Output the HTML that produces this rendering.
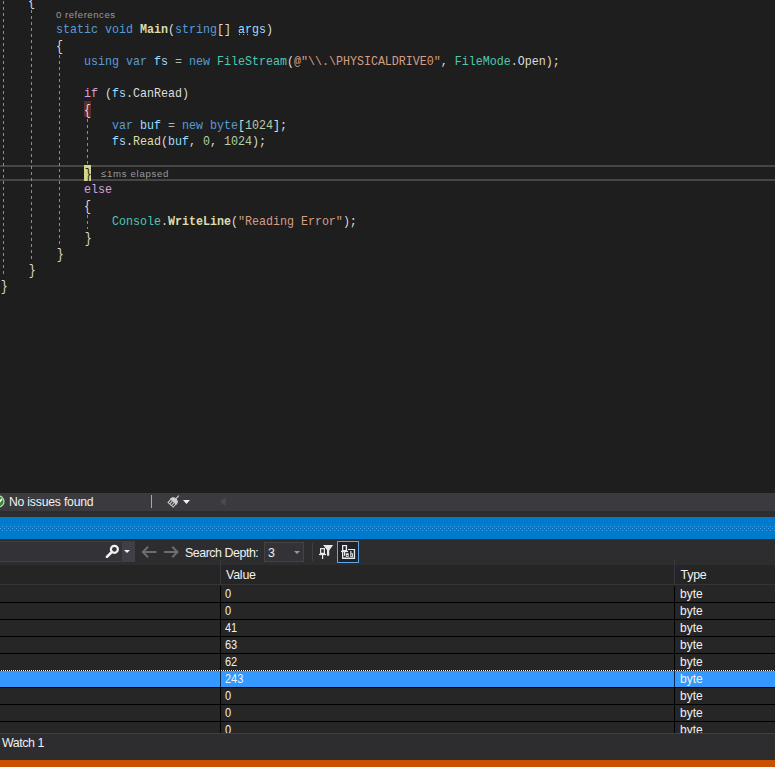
<!DOCTYPE html><html><head><meta charset="utf-8"><style>
*{margin:0;padding:0;box-sizing:border-box}
html,body{width:775px;height:767px;overflow:hidden;background:#1e1e1e}
.a{position:absolute}
.code{position:absolute;left:0;white-space:pre;font-family:"Liberation Mono",monospace;font-size:11.67px;line-height:16px;height:16px;color:#dcdcdc;transform:scaleY(1.1);transform-origin:0 11.5px}
.b{font-weight:bold}
.br{display:inline-block;transform:translateY(1.2px) scaleY(1.1);transform-origin:50% 55%}
.br2{display:inline-block;transform:translate(0.8px,1.2px) scaleY(1.1);transform-origin:50% 55%}
.g{position:absolute;width:1px;background-image:linear-gradient(to bottom,#8c8c8c 0,#8c8c8c 3px,transparent 3px,transparent 6px);background-size:1px 6px;background-repeat:repeat-y}
.ui{font-family:"Liberation Sans",sans-serif;font-size:12px;color:#f1f1f1;white-space:pre;line-height:14px}
svg{position:absolute;overflow:visible}
</style></head><body>

<div class="a" style="left:0px;top:165px;width:775px;height:2px;background:#464646;"></div>
<div class="a" style="left:0px;top:179px;width:775px;height:2px;background:#464646;"></div>
<div class="a" style="left:84px;top:101px;width:7px;height:16px;background:#5e2b2b;"></div>
<div class="a" style="left:84px;top:165px;width:7px;height:16px;background:#d5d686;"></div>
<div class="g" style="left:3px;top:0px;height:277px;background-position:0 1px"></div>
<div class="g" style="left:31px;top:8px;height:253px;background-position:0 2px"></div>
<div class="g" style="left:59px;top:53px;height:192px;background-position:0 2px"></div>
<div class="g" style="left:87px;top:117px;height:48px;background-position:0 2px"></div>
<div class="g" style="left:87px;top:213px;height:16px;background-position:0 2px"></div>
<div class="code" style="top:-7px;left:28px"><span style="color:#dcdcdc" class="br">{</span></div>
<div class="code" style="top:22px;left:56px"><span style="color:#569cd6">static</span><span style="color:#dcdcdc"> </span><span style="color:#569cd6">void</span><span style="color:#dcdcdc"> </span><span style="color:#dcdcaa" class="b">Main</span><span style="color:#dcdcdc">(</span><span style="color:#569cd6">string</span><span style="color:#dcdcdc">[]</span><span style="color:#dcdcdc"> </span><span style="color:#9cdcfe">args</span><span style="color:#dcdcdc">)</span></div>
<div class="code" style="top:38px;left:56px"><span style="color:#dcdcdc" class="br">{</span></div>
<div class="code" style="top:54px;left:84px"><span style="color:#569cd6">using</span><span style="color:#dcdcdc"> </span><span style="color:#569cd6">var</span><span style="color:#dcdcdc"> </span><span style="color:#9cdcfe">fs</span><span style="color:#dcdcdc"> </span><span style="color:#b4b4b4">=</span><span style="color:#dcdcdc"> </span><span style="color:#569cd6">new</span><span style="color:#dcdcdc"> </span><span style="color:#4ec9b0">FileStream</span><span style="color:#dcdcdc">(</span><span style="color:#d69d85">@&quot;\\.\PHYSICALDRIVE0&quot;</span><span style="color:#dcdcdc">, </span><span style="color:#4ec9b0">FileMode</span><span style="color:#dcdcdc">.</span><span style="color:#dcdcdc">Open</span><span style="color:#dcdcdc">);</span></div>
<div class="code" style="top:86px;left:84px"><span style="color:#d8a0df">if</span><span style="color:#dcdcdc"> (</span><span style="color:#9cdcfe">fs</span><span style="color:#dcdcdc">.</span><span style="color:#dcdcdc">CanRead</span><span style="color:#dcdcdc">)</span></div>
<div class="code" style="top:102px;left:84px"><span style="color:#dcdcdc" class="br">{</span></div>
<div class="code" style="top:118px;left:112px"><span style="color:#569cd6">var</span><span style="color:#dcdcdc"> </span><span style="color:#9cdcfe">buf</span><span style="color:#dcdcdc"> </span><span style="color:#b4b4b4">=</span><span style="color:#dcdcdc"> </span><span style="color:#569cd6">new</span><span style="color:#dcdcdc"> </span><span style="color:#569cd6">byte</span><span style="color:#dcdcdc">[</span><span style="color:#b5cea8">1024</span><span style="color:#dcdcdc">];</span></div>
<div class="code" style="top:134px;left:112px"><span style="color:#9cdcfe">fs</span><span style="color:#dcdcdc">.</span><span style="color:#dcdcaa">Read</span><span style="color:#dcdcdc">(</span><span style="color:#9cdcfe">buf</span><span style="color:#dcdcdc">, </span><span style="color:#b5cea8">0</span><span style="color:#dcdcdc">, </span><span style="color:#b5cea8">1024</span><span style="color:#dcdcdc">);</span></div>
<div class="code" style="top:166px;left:84px"><span style="color:#1e1e1e" class="br2">}</span></div>
<div class="code" style="top:182px;left:84px"><span style="color:#d8a0df">else</span></div>
<div class="code" style="top:198px;left:84px"><span style="color:#dcdcdc" class="br">{</span></div>
<div class="code" style="top:214px;left:112px"><span style="color:#4ec9b0">Console</span><span style="color:#dcdcdc">.</span><span style="color:#dcdcaa" class="b">WriteLine</span><span style="color:#dcdcdc">(</span><span style="color:#d69d85">&quot;Reading Error&quot;</span><span style="color:#dcdcdc">);</span></div>
<div class="code" style="top:230px;left:84px"><span style="color:#dcdcdc" class="br2">}</span></div>
<div class="code" style="top:246px;left:56px"><span style="color:#dcdcdc" class="br2">}</span></div>
<div class="code" style="top:262px;left:28px"><span style="color:#dcdcdc" class="br2">}</span></div>
<div class="code" style="top:278px;left:0px"><span style="color:#dcdcdc" class="br2">}</span></div>
<div class="a ui" style="left:56px;top:8px;font-size:9.6px;color:#999999;letter-spacing:0.52px">0 references</div>
<div class="a ui" style="left:101px;top:167px;font-size:9.6px;color:#999999;letter-spacing:0.7px">≤1ms elapsed</div>
<div class="a" style="left:239px;top:34px;width:1px;height:1px;background:#b4b4b4;"></div>
<div class="a" style="left:243px;top:34px;width:1px;height:1px;background:#b4b4b4;"></div>
<div class="a" style="left:247px;top:34px;width:1px;height:1px;background:#b4b4b4;"></div>
<div class="a" style="left:0px;top:493px;width:775px;height:18px;background:#3b3b3f;"></div>
<div class="a" style="left:0px;top:511px;width:775px;height:6px;background:#2d2d30;"></div>
<svg style="left:0;top:493px" width="10" height="18"><circle cx="-1.5" cy="8.5" r="5.5" fill="#388a34" stroke="#b6e3b3" stroke-width="1.2"/><path d="M-4 8.5 L-2 10.5 L2 6" stroke="#fff" stroke-width="1.5" fill="none"/></svg>
<div class="a ui" style="left:9px;top:495px;font-size:12.2px;color:#f1f1f1;letter-spacing:-0.2px">No issues found</div>
<div class="a" style="left:151px;top:495px;width:1px;height:13px;background:#a8a8a8;"></div>
<svg style="left:166.8px;top:492.6px" width="16" height="16"><g transform="rotate(42 7 8)" fill="none" stroke="#cfcfcf" stroke-width="1"><rect x="3.5" y="8.5" width="7" height="4.6"/><line x1="5.8" y1="9" x2="5.8" y2="13"/><line x1="8.2" y1="9" x2="8.2" y2="13"/><path d="M3.2 8.6 C3.2 4.2 10.8 4.2 10.8 8.6 Z" fill="#cfcfcf"/><line x1="7" y1="5.5" x2="7" y2="0.8" stroke-width="1.1"/></g></svg>
<svg style="left:183px;top:500px" width="8" height="5"><path d="M0 0 H7 L3.5 4 Z" fill="#f1f1f1"/></svg>
<svg style="left:218.5px;top:496.6px" width="8" height="10"><path d="M6.6 0 V9.3 L0.8 4.65 Z" fill="#4b4b4f"/></svg>
<div class="a" style="left:0px;top:517px;width:775px;height:22px;background:#007acc;"></div>
<svg style="left:0;top:526px" width="775" height="5"><defs><pattern id="dots" width="4" height="4" patternUnits="userSpaceOnUse"><rect x="2" y="0" width="1" height="1" fill="#4aa6ea"/><rect x="0" y="2" width="1" height="1" fill="#4aa6ea"/></pattern></defs><rect width="775" height="5" fill="url(#dots)"/></svg>
<div class="a" style="left:0px;top:539px;width:775px;height:26px;background:#2d2d30;"></div>
<div class="a" style="left:0px;top:539px;width:775px;height:1px;background:#173452;"></div>
<div class="a" style="left:-1px;top:541px;width:136px;height:21px;background:#333337;border:1px solid #3f3f46"></div>
<div class="a" style="left:122px;top:542px;width:12px;height:19px;background:#3f3f46;"></div>
<svg style="left:104px;top:544px" width="18" height="16"><circle cx="10.4" cy="5.3" r="3.5" fill="none" stroke="#f1f1f1" stroke-width="2.2"/><line x1="7.8" y1="8" x2="2.9" y2="12.9" stroke="#f1f1f1" stroke-width="2.6" stroke-linecap="round"/></svg>
<svg style="left:124px;top:550px" width="7" height="4"><path d="M0 0 H6 L3 3 Z" fill="#f1f1f1"/></svg>
<svg style="left:141px;top:545px" width="40" height="14"><g stroke="#6d6d6d" stroke-width="2" fill="none"><path d="M2 7 H15.5 M7 1.8 L1.8 7 L7 12.2"/><path d="M23 7 H36.5 M31.3 1.8 L36.5 7 L31.3 12.2"/></g></svg>
<div class="a ui" style="left:185px;top:546px;font-size:12.4px;color:#f1f1f1;letter-spacing:-0.45px">Search Depth:</div>
<div class="a" style="left:264px;top:542px;width:40px;height:20px;background:#333337;border:1px solid #434346"></div>
<div class="a ui" style="left:268px;top:546px;font-size:12.4px;color:#f1f1f1;">3</div>
<svg style="left:294px;top:551px" width="7" height="4"><path d="M0 0 H6 L3 3 Z" fill="#9a9a9a"/></svg>
<div class="a" style="left:312px;top:543px;width:1px;height:18px;background:#3f3f46;"></div>
<svg style="left:0;top:0" width="775" height="767"><g fill="#e8e8e8"><path fill-rule="evenodd" d="M320 548 H325 V554 H320 Z M321.2 549.3 V552.8 H323.8 V549.3 Z"/><rect x="319" y="553.8" width="7" height="1.3"/><rect x="322" y="555" width="1.2" height="4"/><path d="M323 545 H333.1 L329.2 550.5 V555.7 H327 V550 Z"/></g></svg>
<div class="a" style="left:337px;top:541px;width:22px;height:22px;background:#1f2329;border:1px solid #5fa6e6"></div>
<svg style="left:0;top:0" width="775" height="767"><g fill="#e8e8e8"><path fill-rule="evenodd" d="M342 545 H347.1 V551 H342 Z M343.3 546.2 V549.9 H345.7 V546.2 Z"/><rect x="341" y="550.8" width="7" height="1.3"/><rect x="344" y="552" width="1.2" height="3.8"/><path d="M342 552 H343.3 V557.6 H353.8 V550 H348 V548.9 H355.1 V558.9 H342 Z"/><path fill-rule="evenodd" d="M345.8 553.2 H348.7 V557.1 H345.8 Z M346.6 555.1 V556.3 H347.8 V555.1 Z"/><path fill-rule="evenodd" d="M350.3 551.1 H351.4 V553.2 H352.9 V557.1 H350.3 Z M351.3 554.2 V556.2 H352 V554.2 Z"/></g></svg>
<div class="a" style="left:0px;top:565px;width:775px;height:19px;background:#252526;"></div>
<div class="a" style="left:0px;top:584px;width:775px;height:1px;background:#353538;"></div>
<div class="a" style="left:0px;top:585px;width:775px;height:1px;background:#262626;"></div>
<div class="a" style="left:220px;top:560px;width:1px;height:24px;background:#38383c;"></div>
<div class="a" style="left:674px;top:560px;width:1px;height:24px;background:#38383c;"></div>
<div class="a ui" style="left:226px;top:568px;font-size:12.4px;color:#f1f1f1;letter-spacing:-0.2px">Value</div>
<div class="a ui" style="left:680.5px;top:568px;font-size:12.4px;color:#f1f1f1;letter-spacing:-0.2px">Type</div>
<div class="a" style="left:0px;top:586px;width:775px;height:16px;background:#262626;"></div>
<div class="a" style="left:0px;top:602px;width:775px;height:1px;background:#000;"></div>
<div class="a" style="left:220px;top:586px;width:1px;height:16px;background:#000;"></div>
<div class="a" style="left:674px;top:586px;width:1px;height:16px;background:#000;"></div>
<div class="a ui" style="left:225px;top:587px;font-size:12.8px;color:#f1f1f1;transform:scaleX(0.86);transform-origin:0 0">0</div>
<div class="a ui" style="left:680px;top:587px;font-size:12px;color:#f1f1f1;">byte</div>
<div class="a" style="left:0px;top:603px;width:775px;height:16px;background:#262626;"></div>
<div class="a" style="left:0px;top:619px;width:775px;height:1px;background:#000;"></div>
<div class="a" style="left:220px;top:603px;width:1px;height:16px;background:#000;"></div>
<div class="a" style="left:674px;top:603px;width:1px;height:16px;background:#000;"></div>
<div class="a ui" style="left:225px;top:604px;font-size:12.8px;color:#f1f1f1;transform:scaleX(0.86);transform-origin:0 0">0</div>
<div class="a ui" style="left:680px;top:604px;font-size:12px;color:#f1f1f1;">byte</div>
<div class="a" style="left:0px;top:620px;width:775px;height:16px;background:#262626;"></div>
<div class="a" style="left:0px;top:636px;width:775px;height:1px;background:#000;"></div>
<div class="a" style="left:220px;top:620px;width:1px;height:16px;background:#000;"></div>
<div class="a" style="left:674px;top:620px;width:1px;height:16px;background:#000;"></div>
<div class="a ui" style="left:225px;top:621px;font-size:12.8px;color:#f1f1f1;transform:scaleX(0.86);transform-origin:0 0">41</div>
<div class="a ui" style="left:680px;top:621px;font-size:12px;color:#f1f1f1;">byte</div>
<div class="a" style="left:0px;top:637px;width:775px;height:16px;background:#262626;"></div>
<div class="a" style="left:0px;top:653px;width:775px;height:1px;background:#000;"></div>
<div class="a" style="left:220px;top:637px;width:1px;height:16px;background:#000;"></div>
<div class="a" style="left:674px;top:637px;width:1px;height:16px;background:#000;"></div>
<div class="a ui" style="left:225px;top:638px;font-size:12.8px;color:#f1f1f1;transform:scaleX(0.86);transform-origin:0 0">63</div>
<div class="a ui" style="left:680px;top:638px;font-size:12px;color:#f1f1f1;">byte</div>
<div class="a" style="left:0px;top:654px;width:775px;height:16px;background:#262626;"></div>
<div class="a" style="left:0px;top:670px;width:775px;height:1px;background:#000;"></div>
<div class="a" style="left:220px;top:654px;width:1px;height:16px;background:#000;"></div>
<div class="a" style="left:674px;top:654px;width:1px;height:16px;background:#000;"></div>
<div class="a ui" style="left:225px;top:655px;font-size:12.8px;color:#f1f1f1;transform:scaleX(0.86);transform-origin:0 0">62</div>
<div class="a ui" style="left:680px;top:655px;font-size:12px;color:#f1f1f1;">byte</div>
<div class="a" style="left:0px;top:671px;width:775px;height:16px;background:#3399ff;"></div>
<div class="a" style="left:0px;top:687px;width:775px;height:1px;background:#000;"></div>
<div class="a" style="left:220px;top:671px;width:1px;height:16px;background:#0a2a50;"></div>
<div class="a" style="left:674px;top:671px;width:1px;height:16px;background:#0a2a50;"></div>
<div class="a ui" style="left:225px;top:672px;font-size:12.8px;color:#f1f1f1;transform:scaleX(0.86);transform-origin:0 0">243</div>
<div class="a ui" style="left:680px;top:672px;font-size:12px;color:#f1f1f1;">byte</div>
<div class="a" style="left:0px;top:688px;width:775px;height:16px;background:#262626;"></div>
<div class="a" style="left:0px;top:704px;width:775px;height:1px;background:#000;"></div>
<div class="a" style="left:220px;top:688px;width:1px;height:16px;background:#000;"></div>
<div class="a" style="left:674px;top:688px;width:1px;height:16px;background:#000;"></div>
<div class="a ui" style="left:225px;top:689px;font-size:12.8px;color:#f1f1f1;transform:scaleX(0.86);transform-origin:0 0">0</div>
<div class="a ui" style="left:680px;top:689px;font-size:12px;color:#f1f1f1;">byte</div>
<div class="a" style="left:0px;top:705px;width:775px;height:16px;background:#262626;"></div>
<div class="a" style="left:0px;top:721px;width:775px;height:1px;background:#000;"></div>
<div class="a" style="left:220px;top:705px;width:1px;height:16px;background:#000;"></div>
<div class="a" style="left:674px;top:705px;width:1px;height:16px;background:#000;"></div>
<div class="a ui" style="left:225px;top:706px;font-size:12.8px;color:#f1f1f1;transform:scaleX(0.86);transform-origin:0 0">0</div>
<div class="a ui" style="left:680px;top:706px;font-size:12px;color:#f1f1f1;">byte</div>
<div class="a" style="left:0px;top:722px;width:775px;height:16px;background:#262626;"></div>
<div class="a" style="left:0px;top:738px;width:775px;height:1px;background:#000;"></div>
<div class="a" style="left:220px;top:722px;width:1px;height:16px;background:#000;"></div>
<div class="a" style="left:674px;top:722px;width:1px;height:16px;background:#000;"></div>
<div class="a ui" style="left:225px;top:723px;font-size:12.8px;color:#f1f1f1;transform:scaleX(0.86);transform-origin:0 0">0</div>
<div class="a ui" style="left:680px;top:723px;font-size:12px;color:#f1f1f1;">byte</div>
<div class="a" style="left:0;top:670px;width:775px;height:1px;background-image:linear-gradient(to right,#fff 0,#fff 1px,#000 1px,#000 2px);background-size:2px 1px;background-position:1px 0"></div>
<div class="a" style="left:0px;top:733px;width:775px;height:1px;background:#3f3f46;"></div>
<div class="a" style="left:0px;top:734px;width:775px;height:26px;background:#2d2d30;"></div>
<div class="a ui" style="left:2px;top:736px;font-size:12.4px;color:#f1f1f1;letter-spacing:-0.45px">Watch 1</div>
<div class="a" style="left:0px;top:760px;width:775px;height:7px;background:#ca5100;"></div>
</body></html>
